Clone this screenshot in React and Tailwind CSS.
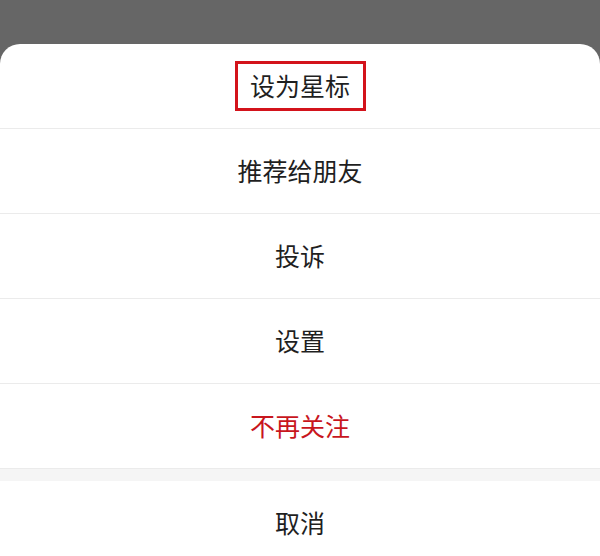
import React from 'react';

const items = [
  { label: '设为星标', boxed: true },
  { label: '推荐给朋友' },
  { label: '投诉' },
  { label: '设置' },
  { label: '不再关注', danger: true },
];

const App = () => {
  return (
    <div
      className="w-[600px] h-[556px] overflow-hidden bg-[#666666] flex flex-col"
      style={{ fontFamily: '"Noto Sans CJK SC", "Noto Sans", sans-serif' }}
    >
      <div className="h-[44px] shrink-0" />
      <div className="flex-1 bg-white rounded-t-[20px] flex flex-col">
        {items.map((item) => (
          <div
            key={item.label}
            className="h-[85px] shrink-0 flex items-center justify-center border-b border-[#ebebeb]"
          >
            {item.boxed ? (
              <span className="border-[3px] border-[#d3131b] w-[131px] h-[50px] flex items-center justify-center text-[25px] text-[#1f1f1f]">
                {item.label}
              </span>
            ) : (
              <span className={`text-[25px] ${item.danger ? 'text-[#c8161d]' : 'text-[#1f1f1f]'}`}>
                {item.label}
              </span>
            )}
          </div>
        ))}
        <div className="h-[12px] shrink-0 bg-[#f5f5f5]" />
        <div className="h-[84px] shrink-0 flex items-center justify-center">
          <span className="text-[25px] text-[#1f1f1f]">取消</span>
        </div>
      </div>
    </div>
  );
};

export default App;
